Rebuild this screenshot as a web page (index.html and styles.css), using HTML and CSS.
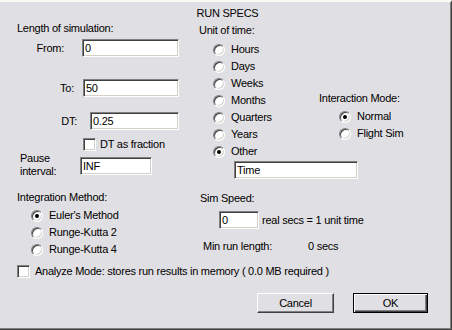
FILE: index.html
```html
<!doctype html>
<html>
<head>
    <meta charset="utf-8">
    <title>Run Specs</title>
    <link rel="stylesheet" href="styles.css">
</head>

<body>
<div class="dialog">
    <div class="title">RUN SPECS</div>

    <div class="top">
        <div class="sim-length">
            <div class="heading">Length of simulation:</div>
            <div class="field field-from"><label>From:</label><input type="text" value="0"></div>
            <div class="field field-to"><label>To:</label><input type="text" value="50"></div>
            <div class="field field-dt"><label>DT:</label><input type="text" value="0.25"></div>
            <div class="check check-fraction"><span class="checkbox"></span>DT as fraction</div>
            <div class="pause">
                <label>Pause<br>interval:</label>
                <input type="text" value="INF">
            </div>
        </div>

        <div class="units">
            <div class="heading">Unit of time:</div>
            <div class="radio-list">
                <div class="radio-row"><span class="radio"></span>Hours</div>
                <div class="radio-row"><span class="radio"></span>Days</div>
                <div class="radio-row"><span class="radio"></span>Weeks</div>
                <div class="radio-row"><span class="radio"></span>Months</div>
                <div class="radio-row"><span class="radio"></span>Quarters</div>
                <div class="radio-row"><span class="radio"></span>Years</div>
                <div class="radio-row"><span class="radio on"></span>Other</div>
            </div>
            <input class="time" type="text" value="Time">
        </div>

        <div class="interaction">
            <div class="heading">Interaction Mode:</div>
            <div class="radio-list">
                <div class="radio-row"><span class="radio on"></span>Normal</div>
                <div class="radio-row"><span class="radio"></span>Flight Sim</div>
            </div>
        </div>
    </div>

    <div class="middle">
        <div class="integration">
            <div class="heading">Integration Method:</div>
            <div class="radio-list">
                <div class="radio-row"><span class="radio on"></span>Euler's Method</div>
                <div class="radio-row"><span class="radio"></span>Runge-Kutta 2</div>
                <div class="radio-row"><span class="radio"></span>Runge-Kutta 4</div>
            </div>
        </div>
        <div class="speed">
            <div class="heading">Sim Speed:</div>
            <div class="speed-row"><input type="text" value="0">real secs = 1 unit time</div>
            <div class="min-run"><span class="min-label">Min run length:</span>0 secs</div>
        </div>
    </div>

    <div class="check analyze"><span class="checkbox"></span>Analyze Mode: stores run results in memory ( 0.0 MB required )</div>

    <div class="buttons">
        <button class="btn-cancel">Cancel</button>
        <button class="btn-ok">OK</button>
    </div>
</div>
</body>
</html>
```

FILE: styles.css
```css
* {
  box-sizing: border-box;
}

html, body {
  margin: 0;
}

body {
  background: #e0dfe3;
  color: #000;
  font: 11px "Liberation Sans", Arial, sans-serif;
  letter-spacing: -0.25px;
}

.dialog {
  width: 452px;
  height: 330px;
  padding: 5px 13px 0 17px;
  border-top: 2px solid #fbfaf4;
  border-right: 1px solid #404040;
  border-bottom: 1px solid #404040;
  box-shadow: inset -1px -1px #808080;
  line-height: 13px;
}

.title {
  text-align: center;
}

input {
  font: inherit;
  letter-spacing: inherit;
  height: 18px;
  padding: 0 2px;
  background: #fff;
  border: 1px solid;
  border-color: #808080 #fff #fff #808080;
  box-shadow: inset 1px 1px #404040, inset -1px -1px #d4d0c8;
  outline: none;
}

/* top block: three columns */
.top {
  display: grid;
  grid-template-columns: 182px 120px 1fr;
  margin-top: 2px;
}

.field {
  display: flex;
  align-items: center;
  height: 18px;
}
.field label {
  text-align: right;
}

.field-from {margin-top: 4px;}
.field-from label {width: 47px;}
.field-from input {margin-left: 18px; width: 97px;}

.field-to {margin-top: 22px;}
.field-to label {width: 57px;}
.field-to input {margin-left: 9px; width: 96px;}

.field-dt {margin-top: 15px;}
.field-dt label {width: 60px;}
.field-dt input {margin-left: 13px; width: 89px;}

.check {
  display: flex;
  align-items: center;
  height: 13px;
}

.checkbox {
  width: 13px;
  height: 13px;
  margin-right: 4px;
  background: #fff;
  border: 1px solid;
  border-color: #808080 #fff #fff #808080;
  box-shadow: inset 1px 1px #404040, inset -1px -1px #d4d0c8;
}

.check-fraction {
  margin: 8px 0 0 66px;
}

.pause {
  display: flex;
  align-items: flex-start;
}
.pause label {
  width: 63px;
  padding: 1px 0 0 3px;
}
.pause input {
  margin-top: 6px;
  width: 72px;
}

/* radios */
.radio-row {
  display: flex;
  align-items: center;
  height: 17px;
}

.radio {
  position: relative;
  width: 12px;
  height: 12px;
  margin-right: 6px;
  border-radius: 50%;
  background: #fff;
  border: 1px solid;
  border-color: #808080 #fff #fff #808080;
  box-shadow: inset 1px 1px #404040, inset -1px -1px #d4d0c8;
}
.radio.on::after {
  content: "";
  position: absolute;
  left: 3px;
  top: 3px;
  width: 4px;
  height: 4px;
  border-radius: 50%;
  background: #000;
}

.units .heading {margin-top: 2px;}
.units .radio-list {margin-top: 4px;}
.units .radio {margin-left: 14px;}
.units .time {
  margin: 1px 0 0 35px;
  width: 124px;
}

.interaction {padding-top: 70px;}
.interaction .radio-list {margin-top: 3px;}
.interaction .radio {margin-left: 20px;}

/* lower block */
.middle {
  display: grid;
  grid-template-columns: 183px 1fr;
  margin-top: 12px;
}

.integration .radio-list {margin-top: 3px;}
.integration .radio {margin-left: 14px;}

.speed .heading {margin-top: 1px;}
.speed-row {
  display: flex;
  align-items: center;
  margin-top: 6px;
}
.speed-row input {
  width: 40px;
  margin: 0 3px 0 19px;
}
.min-run {
  margin-top: 11px;
  padding-left: 3px;
}
.min-label {
  display: inline-block;
  width: 105px;
}

.analyze {
  margin-top: 7px;
}
.analyze .checkbox {margin-right: 5px;}

/* buttons */
.buttons {
  display: flex;
  justify-content: flex-end;
  gap: 19px;
  margin: 15px 10px 0 0;
}

button {
  font: inherit;
  letter-spacing: inherit;
  height: 20px;
  padding: 0;
  background: #e0dfe3;
  color: #000;
  border: 1px solid;
  border-color: #fff #404040 #404040 #fff;
  box-shadow: inset -1px -1px #808080;
}
.btn-cancel {width: 77px;}
.btn-ok {
  width: 75px;
  border-color: #000;
  box-shadow: inset 1px 1px #fff, inset -1px -1px #404040, inset -2px -2px #808080;
}
```
